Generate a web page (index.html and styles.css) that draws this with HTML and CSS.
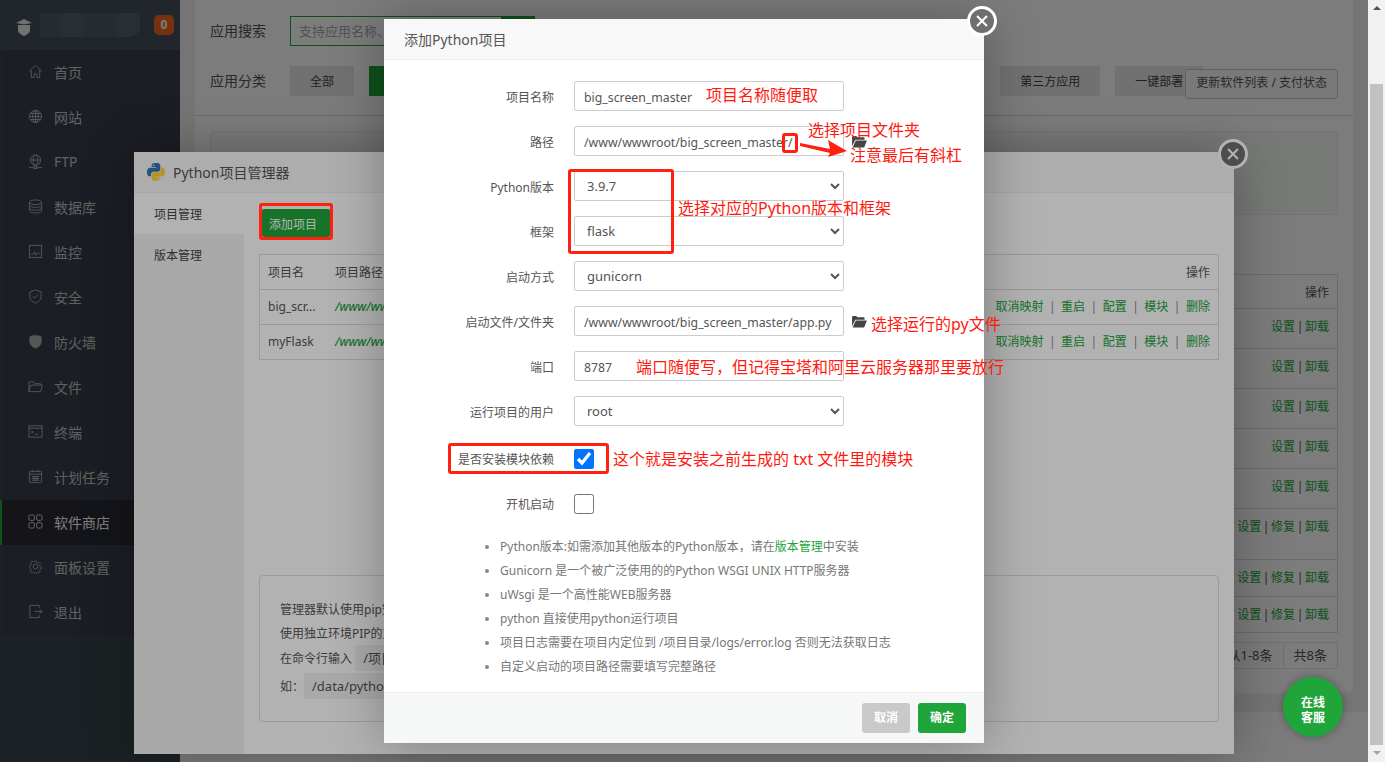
FILE: index.html
```html
<!DOCTYPE html>
<html lang="zh-CN">
<head>
  <meta charset="UTF-8" />
  <title>软件商店 - 添加Python项目</title>
  <link rel="stylesheet" href="styles.css">
</head>
<body>
<svg class="sprite" width="0" height="0">
  <symbol id="i-home" viewBox="0 0 16 16"><path d="M1 8 8 1.500 15 8M3.500 6.500V14.500h3v-4h3v4h3v-8"/></symbol>
  <symbol id="i-globe" viewBox="0 0 16 16"><circle cx="8" cy="8" r="6.500"/><ellipse cx="8" cy="8" rx="3" ry="6.500"/><path d="M1.500 8h13M2.500 4.800h11M2.500 11.200h11M8 1.500v13"/></symbol>
  <symbol id="i-ftp" viewBox="0 0 16 16"><circle cx="8" cy="6.500" r="5.500"/><ellipse cx="8" cy="6.500" rx="2.500" ry="5.500"/><path d="M2.500 6.500h11M8 12v2M1 14.500h5M10 14.500h5"/><rect x="6.500" y="13.500" width="3" height="2"/></symbol>
  <symbol id="i-db" viewBox="0 0 16 16"><ellipse cx="8" cy="3.500" rx="6.500" ry="2.500"/><path d="M1.500 3.500v9c0 1.400 3 2.500 6.500 2.500s6.500-1.100 6.500-2.500v-9M1.500 6.500c0 1.400 3 2.500 6.500 2.500s6.500-1.100 6.500-2.500M1.500 9.500c0 1.400 3 2.500 6.500 2.500s6.500-1.100 6.500-2.500"/></symbol>
  <symbol id="i-chart" viewBox="0 0 16 16"><rect x="1.500" y="1.500" width="13" height="13"/><path d="M3 11h2.500l1.500-3 1.500 4 1.500-2h3"/></symbol>
  <symbol id="i-safe" viewBox="0 0 16 16"><path d="M8 1 14 3v5c0 3.500-2.500 5.800-6 7-3.500-1.200-6-3.500-6-7V3z"/><path d="m5 7.500 2.300 2.300L11 6"/></symbol>
  <symbol id="i-wall" viewBox="0 0 16 16"><path fill="currentColor" d="M2 3l2-.5L5.500 1.500 7 2.500 8 1l1 1.500 1.500-1 1.500 1L14 3v5c0 3.500-2.500 5.800-6 7-3.500-1.200-6-3.500-6-7z"/></symbol>
  <symbol id="i-folder" viewBox="0 0 16 16"><path d="M1 13.500V3h5l1.500 2h6v1.500M1 13.500 3 6.500h12.500l-2 7z"/></symbol>
  <symbol id="i-term" viewBox="0 0 16 16"><rect x="1" y="2" width="14" height="12"/><path d="M1 4.500h14M3.500 7l2 1.500-2 1.500M7 11h3.500"/></symbol>
  <symbol id="i-cal" viewBox="0 0 16 16"><rect x="1.500" y="2.500" width="13" height="12" rx="1"/><path d="M1.500 5.500h13M5 1v2.500M11 1v2.500M4 8h8M4 10h8M4 12h8M6.500 7.500v5M9.500 7.500v5"/></symbol>
  <symbol id="i-grid" viewBox="0 0 16 16"><rect x="1" y="1" width="5.800" height="5.800" rx="1.500"/><rect x="9.200" y="1" width="5.800" height="5.800" rx="1.500"/><rect x="1" y="9.200" width="5.800" height="5.800" rx="1.500"/><rect x="9.200" y="9.200" width="5.800" height="5.800" rx="1.500"/></symbol>
  <symbol id="i-gear" viewBox="0 0 16 16"><circle cx="8" cy="8" r="2.500"/><path d="M6.800 1h2.400l.4 2 1.700.8 1.800-1 1.300 1.800-1.300 1.500.5 1.800 1.900.8v2l-1.900.7-.6 1.700 1.100 1.600-1.600 1.400-1.700-1-1.700.7-.3 1.900H6.800l-.4-1.900-1.700-.7-1.700 1-1.600-1.400 1.100-1.600-.6-1.700L.5 9V7l1.900-.8.5-1.800L1.600 2.900 2.900 1.100l1.800 1 1.700-.8z" transform="translate(1.300 1.300) scale(.84)"/></symbol>
  <symbol id="i-exit" viewBox="0 0 16 16"><path d="M12 4V1.500H2v13h10V12M7 8h8M12.500 5.500 15 8l-2.500 2.500"/></symbol>
  <symbol id="i-open" viewBox="0 0 16 14"><path d="M0 12V2.500C0 1.700.5 1 1.300 1h3.200l1.200 1.500h6.500c.8 0 1.300.5 1.300 1.300V5H3.500L0 12z"/><path d="M4 6h12l-3 7.500H.6z"/></symbol>
</svg>

<div class="viewport">
  <div class="page">
    <aside class="sidebar">
      <div class="brand">
        <svg class="brand-logo" viewBox="0 0 16 18"><path d="M2 7h12v5c0 3-3 4.500-6 6-3-1.500-6-3-6-6z"/><path d="M0 5 8 1l8 4-8 1.500z"/></svg>
        <div class="brand-name"></div>
        <span class="brand-badge">0</span>
      </div>
      <ul class="menu">
        <li><svg class="ico"><use href="#i-home"/></svg>首页</li>
        <li><svg class="ico"><use href="#i-globe"/></svg>网站</li>
        <li><svg class="ico"><use href="#i-ftp"/></svg>FTP</li>
        <li><svg class="ico"><use href="#i-db"/></svg>数据库</li>
        <li><svg class="ico"><use href="#i-chart"/></svg>监控</li>
        <li><svg class="ico"><use href="#i-safe"/></svg>安全</li>
        <li><svg class="ico"><use href="#i-wall"/></svg>防火墙</li>
        <li><svg class="ico"><use href="#i-folder"/></svg>文件</li>
        <li><svg class="ico"><use href="#i-term"/></svg>终端</li>
        <li><svg class="ico"><use href="#i-cal"/></svg>计划任务</li>
        <li class="active"><svg class="ico"><use href="#i-grid"/></svg>软件商店</li>
        <li><svg class="ico"><use href="#i-gear"/></svg>面板设置</li>
        <li><svg class="ico"><use href="#i-exit"/></svg>退出</li>
      </ul>
    </aside>

    <main class="main">
      <section class="card">
        <div class="filters">
          <div class="filter-row">
            <span class="filter-label">应用搜索</span>
            <div class="search"><span class="search-input">支持应用名称、</span><span class="search-btn"></span></div>
          </div>
          <div class="filter-row">
            <span class="filter-label">应用分类</span>
            <span class="cat">全部</span>
            <span class="cat on"></span>
            <span class="cat-spacer"></span>
            <span class="cat">第三方应用</span>
            <span class="cat last">一键部署</span>
            <span class="update-btn">更新软件列表 / 支付状态</span>
          </div>
        </div>
        <div class="card-body">
          <div class="recommend"></div>
          <table class="soft-table">
            <tr class="h-head"><th>操作</th></tr>
            <tr class="h40"><td><a>设置</a> | <a>卸载</a></td></tr>
            <tr class="h40"><td><a>设置</a> | <a>卸载</a></td></tr>
            <tr class="h40"><td><a>设置</a> | <a>卸载</a></td></tr>
            <tr class="h40"><td><a>设置</a> | <a>卸载</a></td></tr>
            <tr class="h40"><td><a>设置</a> | <a>卸载</a></td></tr>
            <tr class="h51"><td><a>设置</a> | <a>修复</a> | <a>卸载</a></td></tr>
            <tr class="h37"><td><a>设置</a> | <a>修复</a> | <a>卸载</a></td></tr>
            <tr class="h36"><td><a>设置</a> | <a>修复</a> | <a>卸载</a></td></tr>
          </table>
          <div class="pager"><span>从1-8条</span><span>共8条</span></div>
        </div>
      </section>
      <footer class="foot"></footer>
    </main>
  </div>
  <div class="scrollbar"><span class="sb-up"></span><span class="sb-thumb"></span><span class="sb-down"></span></div>

  <div class="shade"></div>

  <div class="layer manager">
    <div class="layer-title"><svg class="py-logo" viewBox="0 0 111 110"><path fill="#3776ab" d="M54.900 0C27 0 28.700 12.100 28.700 12.100v12.500h26.600v3.800H18.100S.2 26.400.2 54.600c0 28.200 15.600 27.200 15.600 27.200h9.300V68.700s-.5-15.600 15.400-15.600h26.500s14.900.2 14.900-14.400V14.600S83.600 0 54.900 0zM40.200 8.400a4.800 4.800 0 110 9.600 4.800 4.800 0 010-9.600z"/><path fill="#ffd43b" d="M55.700 109.200c27.900 0 26.200-12.100 26.200-12.100V84.600H55.300v-3.800h37.200s17.900 2 17.900-26.200-15.600-27.200-15.600-27.200h-9.300v13.100s.5 15.600-15.400 15.600H43.600s-14.900-.2-14.900 14.400v24.100s-2.300 14.600 27 14.600zm14.700-8.400a4.800 4.800 0 110-9.600 4.800 4.800 0 010 9.600z"/></svg>Python项目管理器</div>
    <span class="close close-manager"></span>
    <div class="manager-body">
      <ul class="tabs">
        <li class="on">项目管理</li>
        <li>版本管理</li>
      </ul>
      <div class="manager-content">
        <button class="add-btn">添加项目</button>
        <table class="proj-table">
          <tr class="p-head"><th class="c-name">项目名</th><th class="c-path">项目路径</th><th class="c-ops">操作</th></tr>
          <tr>
            <td class="c-name">big_scr...</td>
            <td class="c-path"><i>/www/wwwroot/big_screen_master/</i></td>
            <td class="c-ops"><a>取消映射</a><b>|</b><a>重启</a><b>|</b><a>配置</a><b>|</b><a>模块</a><b>|</b><a>删除</a></td>
          </tr>
          <tr>
            <td class="c-name">myFlask</td>
            <td class="c-path"><i>/www/wwwroot/myFlask/</i></td>
            <td class="c-ops"><a>取消映射</a><b>|</b><a>重启</a><b>|</b><a>配置</a><b>|</b><a>模块</a><b>|</b><a>删除</a></td>
          </tr>
        </table>
        <div class="pip-note">
          <p>管理器默认使用pip安装项目依赖模块</p>
          <p>使用独立环境PIP的方法</p>
          <p>在命令行输入 <code>/项目目录/venv/bin/pip</code></p>
          <p>如：<code>/data/python/venv/bin/pip</code></p>
        </div>
      </div>
    </div>
  </div>

  <div class="shade"></div>

  <div class="layer adder">
    <div class="layer-title">添加Python项目</div>
    <span class="close close-adder"></span>
    <div class="adder-body">
      <div class="form-row"><label>项目名称</label><input class="field" value="big_screen_master"></div>
      <div class="form-row"><label>路径</label><input class="field" value="/www/wwwroot/big_screen_master/"><svg class="open-ico"><use href="#i-open"/></svg></div>
      <div class="form-row"><label>Python版本</label><select class="field"><option>3.9.7</option></select></div>
      <div class="form-row"><label>框架</label><select class="field"><option>flask</option></select></div>
      <div class="form-row"><label>启动方式</label><select class="field"><option>gunicorn</option></select></div>
      <div class="form-row"><label>启动文件/文件夹</label><input class="field" value="/www/wwwroot/big_screen_master/app.py"><svg class="open-ico"><use href="#i-open"/></svg></div>
      <div class="form-row"><label>端口</label><input class="field" value="8787"></div>
      <div class="form-row"><label>运行项目的用户</label><select class="field"><option>root</option></select></div>
      <div class="form-row check-row first-check"><label>是否安装模块依赖</label><input type="checkbox" class="check" checked></div>
      <div class="form-row check-row"><label>开机启动</label><input type="checkbox" class="check"></div>
      <ul class="tips">
        <li>Python版本:如需添加其他版本的Python版本，请在<a>版本管理</a>中安装</li>
        <li>Gunicorn 是一个被广泛使用的的Python WSGI UNIX HTTP服务器</li>
        <li>uWsgi 是一个高性能WEB服务器</li>
        <li>python 直接使用python运行项目</li>
        <li>项目日志需要在项目内定位到 /项目目录/logs/error.log 否则无法获取日志</li>
        <li>自定义启动的项目路径需要填写完整路径</li>
      </ul>
    </div>
    <div class="layer-foot">
      <button class="btn-cancel">取消</button>
      <button class="btn-ok">确定</button>
    </div>
  </div>

  <!-- red marks drawn on the screenshot -->
  <div class="marks">
    <span class="box box-add"></span>
    <span class="box box-slash"></span>
    <span class="box box-select"></span>
    <span class="box box-check"></span>
    <svg class="arrow" viewBox="0 0 50 20"><path d="M1 3 31 9 29 0 48 11 29 17 31 13 1 6z"/></svg>
    <span class="note n-name">项目名称随便取</span>
    <span class="note n-dir">选择项目文件夹</span>
    <span class="note n-slash">注意最后有斜杠</span>
    <span class="note n-ver">选择对应的Python版本和框架</span>
    <span class="note n-run">选择运行的py文件</span>
    <span class="note n-port">端口随便写，但记得宝塔和阿里云服务器那里要放行</span>
    <span class="note n-txt">这个就是安装之前生成的 txt 文件里的模块</span>
  </div>

  <div class="fab">在线<br>客服</div>
</div>
</body>
</html>
```

FILE: styles.css
```css
html, body {
  margin: 0;
  padding: 0;
  height: 100%;
  overflow: hidden;
}
body {
  font-family: "Noto Sans", "Noto Sans CJK SC", sans-serif;
  font-size: 12px;
  color: #555;
}
ul {
  list-style: none;
  margin: 0;
  padding: 0;
}
.sprite {
  position: absolute;
}
.viewport {
  position: relative;
  display: flex;
  width: 100%;
  height: 762px;
  overflow: hidden;
}
.page {
  flex: 1;
  display: flex;
  min-width: 0;
}

/* sidebar */
.sidebar {
  width: 180px;
  flex-shrink: 0;
  background: #3a454c;
}
.brand {
  height: 50px;
  display: flex;
  align-items: center;
  padding-left: 16px;
  background: #424f5a;
}
.brand-logo {
  width: 16px;
  height: 18px;
  fill: #e8e8e8;
  margin-top: 4px;
}
.brand-name {
  width: 100px;
  height: 24px;
  margin-left: 8px;
  border-radius: 0 0 10px 0;
  background: linear-gradient(90deg, #4e5a63 0 20%, #566069 20% 45%, #4e5a63 45% 75%, #566069 75%);
}
.brand-badge {
  width: 20px;
  height: 20px;
  margin-left: 14px;
  border-radius: 5px;
  background: #f8661f;
  color: #fff;
  font-size: 12px;
  font-weight: 700;
  line-height: 20px;
  text-align: center;
}
.menu {
  margin-left: 2px;
  background: #383e4b;
}
.menu li {
  height: 45px;
  box-sizing: border-box;
  padding: 0 0 2px 26px;
  display: flex;
  align-items: center;
  font-size: 14px;
  color: #c8c8c8;
}
.menu li.active {
  margin-left: -2px;
  border-left: 2px solid #20a53a;
  background: #2a2c36;
  color: #fff;
}
.ico {
  width: 15px;
  height: 15px;
  margin-right: 11px;
  fill: none;
  stroke: currentColor;
  stroke-width: 1;
  flex-shrink: 0;
  opacity: 0.85;
}

/* store page underneath */
.main {
  flex: 1;
  min-width: 0;
  display: flex;
  flex-direction: column;
  background: #f1f1f1;
}
.card {
  height: 693px;
  margin: 0 15px 0 15px;
  box-sizing: border-box;
  background: #fff;
  border-radius: 0 0 6px 6px;
}
.filters {
  height: 116px;
  box-sizing: border-box;
  padding: 16px 15px 0;
  border-bottom: 1px solid #ddd;
}
.filter-row {
  display: flex;
  align-items: center;
  height: 30px;
  margin-bottom: 20px;
  position: relative;
}
.filter-label {
  width: 80px;
  padding-bottom: 2px;
  font-size: 14px;
  color: #555;
}
.search {
  display: flex;
  width: 245px;
}
.search-input {
  flex: 1;
  height: 30px;
  box-sizing: border-box;
  border: 1px solid #20a53a;
  padding-left: 8px;
  line-height: 28px;
  font-size: 13px;
  color: #aaa;
  white-space: nowrap;
  overflow: hidden;
}
.search-btn {
  width: 33px;
  background: #20a53a;
}
.cat {
  height: 30px;
  padding: 0 20px;
  margin-right: 15px;
  line-height: 31px;
  background: #e8e8e8;
  color: #444;
}
.cat.on {
  width: 40px;
  background: #20a53a;
  color: #fff;
}
.cat.last {
  margin-right: 0;
  width: 48px;
}
.cat-spacer {
  flex: 1;
}
.update-btn {
  height: 28px;
  margin-left: -18px;
  padding: 0 10px;
  box-sizing: content-box;
  position: relative;
  top: 3px;
  border: 1px solid #c8c8c8;
  border-radius: 3px;
  background: #fafafa;
  line-height: 26px;
  color: #555;
  white-space: nowrap;
}
.card-body {
  padding: 15px 15px 0;
}
.recommend {
  height: 84px;
  border: 1px solid #ececec;
  border-radius: 4px;
  background: #f6fbf6;
  box-sizing: border-box;
  margin-bottom: 59px;
}
.soft-table {
  width: 100%;
  border-collapse: collapse;
}
.soft-table th, .soft-table td {
  border: 1px solid #ddd;
  padding: 8px 8px 0;
  text-align: right;
  vertical-align: top;
  font-weight: 400;
  line-height: 20px;
  color: #555;
  word-spacing: -1.5px;
}
.soft-table a {
  color: #20a53a;
}
.h-head { height: 34px; }
.h40 { height: 40px; }
.h51 { height: 51px; }
.h37 { height: 37px; }
.h36 { height: 36px; }
.pager {
  display: flex;
  justify-content: flex-end;
  margin-top: 9px;
  font-size: 13px;
  color: #555;
}
.pager span {
  height: 27px;
  box-sizing: border-box;
  padding: 0 10px;
  border: 1px solid #e6e6e6;
  line-height: 25px;
  margin-left: -1px;
}
.foot {
  flex: 1;
  margin-top: 19px;
  background: #fff;
}

/* window scrollbar */
.scrollbar {
  width: 17px;
  flex-shrink: 0;
  display: flex;
  flex-direction: column;
  background: #f1f1f1;
  position: relative;
  z-index: 60;
}
.sb-up, .sb-down {
  height: 17px;
  flex-shrink: 0;
  position: relative;
}
.sb-up::after, .sb-down::after {
  content: "";
  position: absolute;
  left: 5px;
  top: 6px;
  border: 4px solid transparent;
  border-top: 0;
  border-bottom: 4px solid #505050;
}
.sb-down::after {
  border-bottom: 0;
  border-top: 4px solid #a3a3a3;
}
.sb-thumb {
  margin: 67px 2px 0;
  height: 661px;
  background: #c1c1c1;
}

/* modal layers */
.shade {
  position: absolute;
  top: 0;
  left: 0;
  right: 17px;
  bottom: 0;
  background: rgba(0,0,0,0.3);
}
.layer {
  position: absolute;
  background: #fff;
  box-shadow: 1px 1px 50px rgba(0,0,0,0.3);
}
.layer-title {
  height: 41px;
  box-sizing: border-box;
  display: flex;
  align-items: center;
  background: #f8f8f8;
  border-bottom: 1px solid #eee;
  font-size: 14px;
  color: #555;
}
.close {
  position: absolute;
  width: 24px;
  height: 24px;
  border: 3px solid #fff;
  border-radius: 50%;
  background: #6f6f6f;
}
.close::before, .close::after {
  content: "";
  position: absolute;
  left: 5px;
  top: 11px;
  width: 14px;
  height: 2px;
  background: #fff;
  transform: rotate(45deg);
}
.close::after {
  transform: rotate(-45deg);
}
.close-manager {
  left: 1084px;
  top: -13px;
}
.close-adder {
  left: 583px;
  top: -13px;
}
.manager {
  left: 134px;
  top: 152px;
  width: 1100px;
  height: 602px;
}
.manager .layer-title {
  padding-left: 13px;
}
.py-logo {
  width: 18px;
  height: 18px;
  margin-right: 8px;
}
.manager-body {
  display: flex;
  height: 561px;
}
.tabs {
  width: 110px;
  flex-shrink: 0;
  background: #f3f3f3;
  font-size: 12px;
}
.tabs li {
  height: 41px;
  padding-left: 20px;
  line-height: 43px;
  color: #444;
}
.tabs li.on {
  background: #fff;
}
.manager-content {
  flex: 1;
  padding: 16px 15px 0;
  min-width: 0;
}
.add-btn {
  display: block;
  width: 68px;
  height: 28px;
  border: 0;
  margin: 0 0 17px 3px;
  padding: 2px 0 0 7px;
  border-radius: 2px;
  background: #20a53a;
  color: #fff;
  font-family: inherit;
  font-size: 12px;
  text-align: left;
}
.proj-table {
  width: 100%;
  border-collapse: collapse;
}
.proj-table th, .proj-table td {
  border-top: 1px solid #ddd;
  border-bottom: 1px solid #ddd;
  height: 34px;
  padding: 0 8px;
  font-weight: 400;
  text-align: left;
  color: #555;
  white-space: nowrap;
}
.proj-table td {
  height: 32px;
  padding-bottom: 2px;
}
.proj-table .c-name {
  width: 51px;
  border-left: 1px solid #ddd;
}
.proj-table .c-ops {
  text-align: right;
  border-right: 1px solid #ddd;
}
.proj-table i {
  color: #20a53a;
  font-weight: 500;
}
.proj-table a {
  color: #20a53a;
}
.proj-table b {
  margin: 0 5.5px;
  font-weight: 400;
  color: #888;
}
.pip-note {
  margin-top: 215px;
  height: 147px;
  box-sizing: border-box;
  padding: 22px 20px 0;
  border: 1px solid #ddd;
  border-radius: 4px;
}
.pip-note p {
  margin: 0;
  line-height: 24px;
}
.pip-note code {
  padding: 4px 8px;
  background: #f2f2f2;
  font-family: inherit;
  font-size: 13px;
}
.pip-note p:last-child {
  margin-top: 3px;
}

/* add project form */
.adder {
  left: 384px;
  top: 19px;
  width: 600px;
  height: 724px;
}
.adder .layer-title {
  padding-left: 20px;
}
.adder-body {
  height: 632px;
  box-sizing: border-box;
  padding-top: 21px;
}
.form-row {
  display: flex;
  align-items: center;
  height: 30px;
  margin-bottom: 15px;
}
.form-row label {
  width: 170px;
  margin-right: 20px;
  padding-top: 2px;
  text-align: right;
  color: #555;
}
.field {
  width: 270px;
  height: 30px;
  box-sizing: border-box;
  border: 1px solid #ccc;
  border-radius: 2px;
  padding: 2px 9px 0;
  font-family: inherit;
  font-size: 12.3px;
  color: #555;
  background: #fff;
  outline: none;
}
select.field {
  padding: 0 8px;
  font-size: 13px;
}
.open-ico {
  width: 15px;
  height: 13px;
  margin-left: 8px;
  fill: #444;
}
.check-row label {
  padding-top: 0;
}
.first-check {
  margin-top: 18px;
}
.check {
  width: 20px;
  height: 20px;
  margin: 0;
}
.tips {
  margin-top: 16px;
  padding-left: 116px;
  list-style: disc;
  color: #777;
}
.tips li {
  line-height: 24px;
}
.tips li::marker {
  color: #888;
}
.tips a {
  color: #20a53a;
}
.layer-foot {
  height: 51px;
  box-sizing: border-box;
  display: flex;
  justify-content: flex-end;
  gap: 8px;
  padding: 10px 18px 0 0;
  background: #f6f8f8;
  border-top: 1px solid #eee;
}
.layer-foot button {
  width: 48px;
  height: 30px;
  border: 0;
  border-radius: 3px;
  padding: 0 0 2px;
  color: #fff;
  font-family: inherit;
  font-size: 12px;
  font-weight: 700;
}
.btn-cancel {
  background: #c9c9c9;
}
.btn-ok {
  background: #20a53a;
}

/* annotations over the screenshot */
.marks {
  position: absolute;
  inset: 0;
  pointer-events: none;
}
.box {
  position: absolute;
  box-sizing: border-box;
  border: 3px solid #ff2010;
  border-radius: 3px;
}
.box-add { left: 259px; top: 203px; width: 74px; height: 37px; }
.box-slash { left: 782px; top: 133px; width: 16px; height: 20px; }
.box-select { left: 568px; top: 169px; width: 106px; height: 85px; }
.box-check { left: 448px; top: 443px; width: 161px; height: 31px; }
.arrow {
  position: absolute;
  left: 799px;
  top: 140px;
  width: 50px;
  height: 20px;
  fill: #ff2010;
}
.note {
  position: absolute;
  font-size: 16px;
  line-height: 22px;
  color: #ff1a10;
  white-space: nowrap;
}
.n-name { left: 706px; top: 84px; }
.n-dir { left: 808px; top: 119px; }
.n-slash { left: 850px; top: 144px; }
.n-ver { left: 678px; top: 197px; }
.n-run { left: 871px; top: 313px; }
.n-port { left: 636px; top: 356px; }
.n-txt { left: 613px; top: 448px; }
.fab {
  position: absolute;
  left: 1283px;
  top: 677px;
  width: 60px;
  height: 60px;
  box-sizing: border-box;
  padding-top: 18px;
  border-radius: 50%;
  background: #20a53a;
  box-shadow: 0 0 8px rgba(0,0,0,0.3);
  color: #fff;
  font-size: 12px;
  font-weight: 700;
  line-height: 15px;
  text-align: center;
}
```
